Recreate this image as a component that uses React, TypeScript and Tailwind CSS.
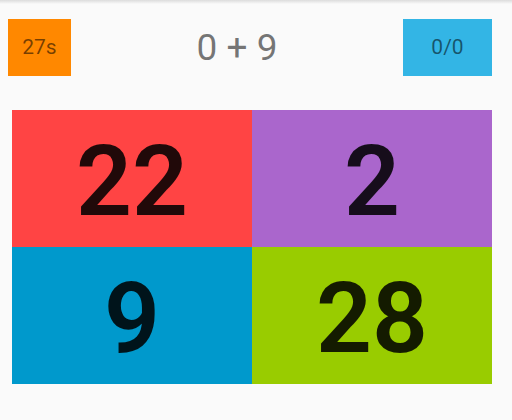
const CELLS = [
  { value: 22, color: 'bg-[#ff4444]' },
  { value: 2, color: 'bg-[#aa66cc]' },
  { value: 9, color: 'bg-[#0099cc]' },
  { value: 28, color: 'bg-[#99cc00]' },
];

export default function App() {
  return (
    <div
      className="relative h-[420px] w-[512px] overflow-hidden bg-[#fafafa]"
      style={{ fontFamily: 'Roboto, "Liberation Sans", sans-serif' }}
    >
      <div className="absolute inset-x-0 top-0 h-[4px] bg-gradient-to-b from-[#dcdcdc] to-transparent" />

      <div className="flex items-center pl-2 pr-5 pt-[19px]">
        <div className="flex h-[57px] w-[63px] items-center justify-center bg-[#ff8800] text-[21px] text-black/[0.54]">
          27s
        </div>
        <div className="flex-1 text-center text-[37px] leading-none text-black/[0.54]">0 + 9</div>
        <div className="flex h-[57px] w-[89px] items-center justify-center bg-[#33b5e5] text-[21px] text-black/[0.54]">
          0/0
        </div>
      </div>

      <div className="ml-3 mr-5 mt-[34px] grid grid-cols-2">
        {CELLS.map((cell) => (
          <div
            key={cell.value}
            className={`flex h-[137px] items-center justify-center pt-[6px] ${cell.color} text-[98px] font-semibold leading-none text-black/[0.87]`}
          >
            {cell.value}
          </div>
        ))}
      </div>
    </div>
  );
}
